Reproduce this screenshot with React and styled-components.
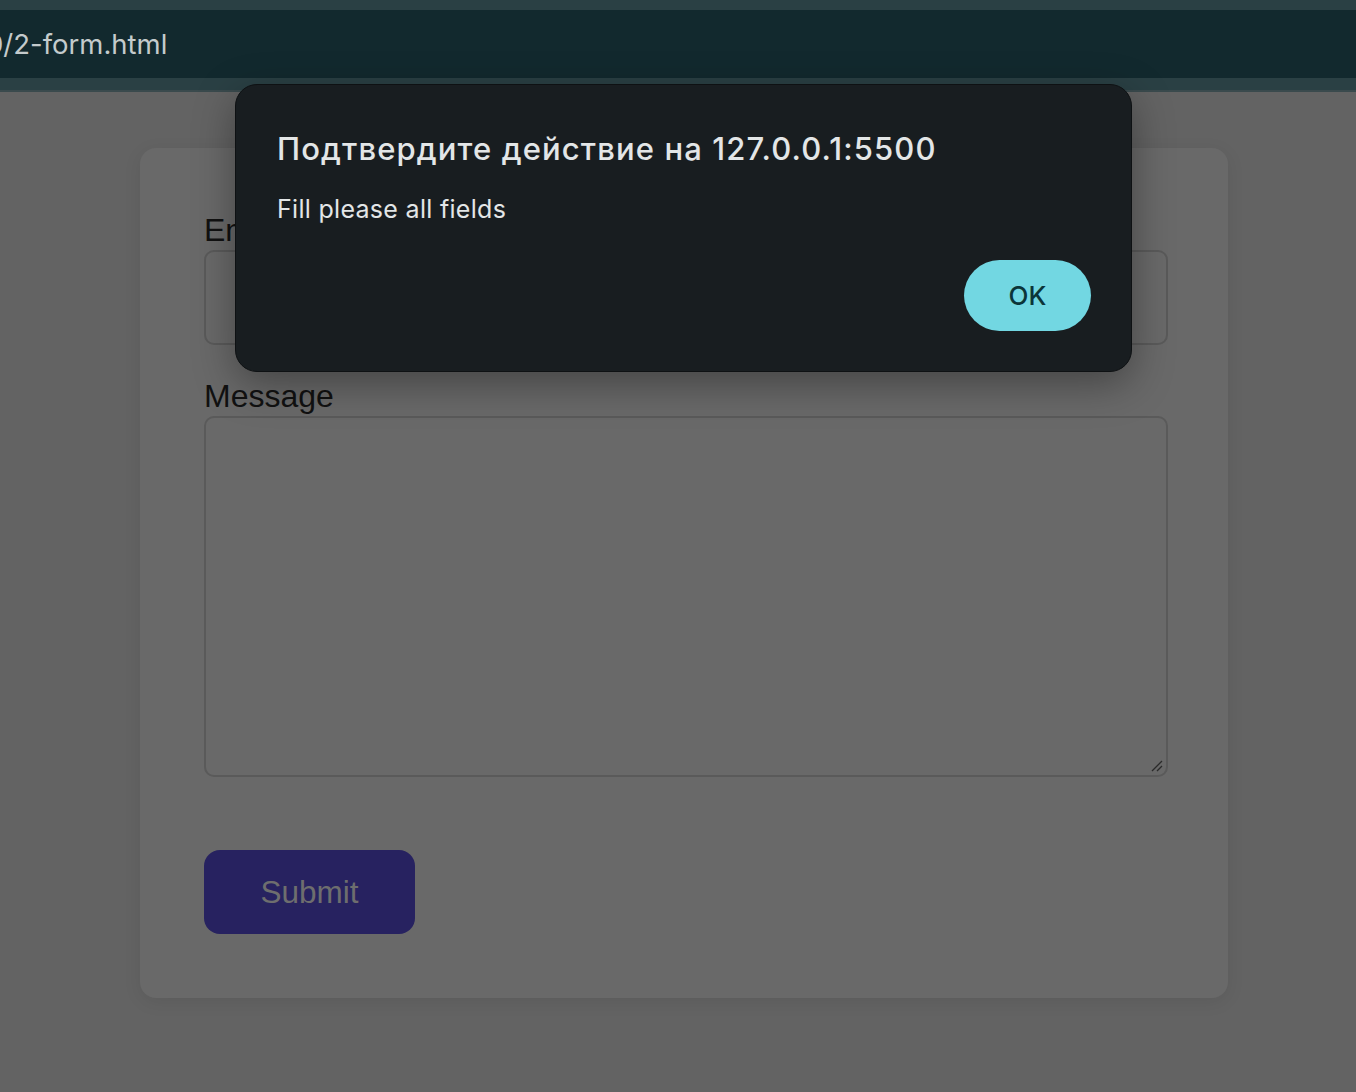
import React from 'react';
import styled, { createGlobalStyle } from 'styled-components';

const GlobalStyle = createGlobalStyle`
  html, body {
    margin: 0;
    padding: 0;
    background: #636363;
  }
  body {
    font-family: "Liberation Sans", Arial, sans-serif;
  }
  * { box-sizing: border-box; }
`;

const Screen = styled.div`
  position: relative;
  width: 1356px;
  height: 1092px;
  overflow: hidden;
  background: #636363;
`;

const Chrome = styled.header`
  height: 92px;
  background: #2a4044;
  border-bottom: 2px solid #3a4a4d;
  padding-top: 10px;
`;

const AddressBar = styled.div`
  height: 68px;
  background: #12292e;
  display: flex;
  align-items: center;
  overflow: hidden;
`;

const Url = styled.span`
  font-family: Inter, "Noto Sans", sans-serif;
  font-size: 27.5px;
  color: #c4cbcc;
  margin-left: -14px;
  white-space: nowrap;
`;

const Page = styled.main`
  display: flex;
  justify-content: flex-start;
  padding: 56px 0 0 140px;
`;

const Card = styled.form`
  width: 1088px;
  height: 850px;
  background: #696969;
  border-radius: 16px;
  box-shadow: 0 4px 18px rgba(0, 0, 0, 0.08);
  padding: 64px 60px 64px 64px;
  display: flex;
  flex-direction: column;
  align-items: flex-start;
`;

const Label = styled.label`
  display: block;
  font-size: 32px;
  line-height: 37px;
  color: #111;
  margin-bottom: 1px;
`;

const Field = styled.div`
  width: 100%;
  height: ${p => p.$h}px;
  border: 2px solid #5a5a5a;
  border-radius: 10px;
  margin-bottom: ${p => p.$gap}px;
  position: relative;
`;

const Grip = styled.svg`
  position: absolute;
  right: 2px;
  bottom: 2px;
`;

const SubmitButton = styled.button`
  width: 211px;
  height: 84px;
  border: none;
  border-radius: 16px;
  background: #272260;
  color: #6e6e6e;
  font-family: "Liberation Sans", Arial, sans-serif;
  font-size: 31.5px;
  padding: 0;
`;

const Dialog = styled.div`
  position: absolute;
  left: 235px;
  top: 84px;
  width: 897px;
  height: 288px;
  background: #181d20;
  border-radius: 22px;
  border: 1px solid #0e1113;
  box-shadow: 0 12px 40px rgba(0, 0, 0, 0.35);
  padding: 44px 40px 40px 41px;
  display: flex;
  flex-direction: column;
  font-family: Inter, "Noto Sans", sans-serif;
`;

const Title = styled.h2`
  margin: 0;
  font-size: 31px;
  font-weight: 500;
  line-height: 40px;
  color: #e3e6e7;
  letter-spacing: 1.12px;
`;

const Message = styled.p`
  margin: 24px 0 0;
  font-size: 25px;
  line-height: 32px;
  color: #e3e6e7;
  letter-spacing: 0.3px;
`;

const Actions = styled.div`
  margin-top: auto;
  display: flex;
  justify-content: flex-end;
`;

const OkButton = styled.button`
  width: 127px;
  height: 71px;
  border: none;
  border-radius: 36px;
  background: #72d7e2;
  color: #0b3539;
  font-family: Inter, "Noto Sans", sans-serif;
  font-size: 26px;
  font-weight: 500;
  padding: 0;
`;

export default function App() {
  return (
    <Screen>
      <GlobalStyle />
      <Chrome>
        <AddressBar>
          <Url>0/2-form.html</Url>
        </AddressBar>
      </Chrome>
      <Page>
        <Card onSubmit={e => e.preventDefault()}>
          <Label>Email</Label>
          <Field $h={95} $gap={33} />
          <Label>Message</Label>
          <Field $h={361} $gap={73}>
            <Grip width="14" height="14" viewBox="0 0 14 14">
              <path d="M2 12 L12 2 M7 12 L12 7" stroke="#2a2a2a" strokeWidth="1.3" />
            </Grip>
          </Field>
          <SubmitButton type="button">Submit</SubmitButton>
        </Card>
      </Page>
      <Dialog>
        <Title>Подтвердите действие на 127.0.0.1:5500</Title>
        <Message>Fill please all fields</Message>
        <Actions>
          <OkButton>OK</OkButton>
        </Actions>
      </Dialog>
    </Screen>
  );
}
